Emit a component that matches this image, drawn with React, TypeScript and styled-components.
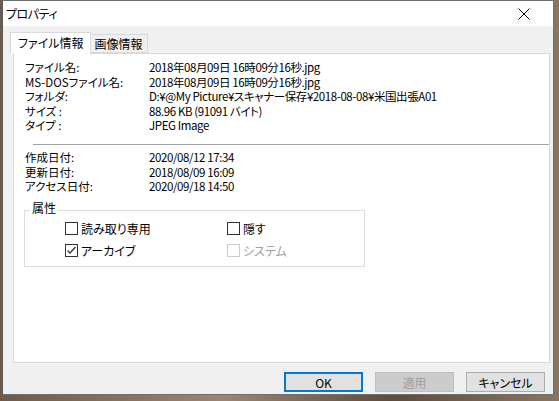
import React from "react";
import styled, { createGlobalStyle } from "styled-components";

const Global = createGlobalStyle`
  html, body { margin: 0; padding: 0; }
  body {
    width: 559px; height: 401px; overflow: hidden;
    background: linear-gradient(90deg, #6e5a48 0%, #9c8672 40%, #5d4b3c 70%, #8a7560 100%);
    font-family: "Noto Sans CJK JP", "Noto Sans", sans-serif;
    font-feature-settings: "palt";
    font-size: 11.5px;
    color: #000;
  }
`;

const Window = styled.div`
  margin-left: 2px;
  width: 552px;
  height: 395px;
  border: 1px solid #6f6f6f;
  border-left-color: #5a5a5a;
  background: #f0f0f0;
  display: flex;
  flex-direction: column;
  box-sizing: border-box;
`;

const TitleBar = styled.div`
  height: 25px;
  background: #fff;
  display: flex;
  align-items: center;
  justify-content: space-between;
  padding: 0 0 0 3px;
  flex: none;
`;

const Title = styled.span`
  font-size: 12px;
  letter-spacing: -0.5px;
`;

const CloseBtn = styled.div`
  width: 46px;
  height: 25px;
  display: flex;
  align-items: center;
  justify-content: center;
  margin-right: 6px;
`;

const Content = styled.div`
  flex: 1;
  display: flex;
  flex-direction: column;
  padding: 6px 6px 0 7px;
`;

const Tabs = styled.div`
  display: flex;
  align-items: flex-end;
  height: 21px;
  position: relative;
  z-index: 1;
`;

const Tab = styled.div<{ $active?: boolean }>`
  box-sizing: border-box;
  border: 1px solid #d9d9d9;
  border-bottom: ${(p) => (p.$active ? "none" : "1px solid #d9d9d9")};
  background: ${(p) => (p.$active ? "#fff" : "#f0f0f0")};
  height: ${(p) => (p.$active ? "22px" : "19px")};
  margin-bottom: ${(p) => (p.$active ? "-1px" : "0")};
  margin-left: ${(p) => (p.$active ? "0" : "-1px")};
  padding: ${(p) => (p.$active ? "2px 6px 0 7px" : "1px 4px 0 4px")};
  line-height: 16px;
  font-size: 12px;
  white-space: nowrap;
`;

const Panel = styled.div`
  box-sizing: border-box;
  height: 310px;
  margin-left: 3px;
  width: 537px;
  background: #fff;
  border: 1px solid #d9d9d9;
  padding: 6px 0 0 11px;
`;

const InfoGrid = styled.div`
  display: grid;
  grid-template-columns: 124px auto;
  line-height: 14.6px;
  white-space: nowrap;
`;

const Label = styled.span``;
const Value = styled.span`
  letter-spacing: -0.4px;
`;

const Separator = styled.div`
  height: 1px;
  background: #a0a0a0;
  margin: 11px 0 5px 8px;
`;

const GroupBox = styled.fieldset`
  margin: 7px 0 0 -1px;
  width: 341px;
  box-sizing: border-box;
  border: 1px solid #dcdcdc;
  padding: 1px 0 8px 40px;
  display: grid;
  grid-template-columns: 162px auto;
  align-content: start;
  row-gap: 8px;
`;

const Legend = styled.legend`
  padding: 0 2px 6px 2px;
  margin-left: -35px;
  line-height: 14px;
  font-size: 12px;
`;

const CheckItem = styled.label<{ $disabled?: boolean }>`
  display: flex;
  align-items: center;
  gap: 3px;
  font-size: 12px;
  color: ${(p) => (p.$disabled ? "#a0a0a0" : "#000")};
  height: 14px;
`;

const Box = styled.span<{ $disabled?: boolean }>`
  width: 13px;
  height: 13px;
  box-sizing: border-box;
  border: 1px solid ${(p) => (p.$disabled ? "#cccccc" : "#333")};
  background: #fff;
  display: flex;
  align-items: center;
  justify-content: center;
`;

const Buttons = styled.div`
  display: flex;
  justify-content: flex-end;
  gap: 12px;
  padding: 9px 2px 0 0;
`;

const Button = styled.div<{ $variant?: "default" | "disabled" | "normal" }>`
  width: 79px;
  height: 20px;
  box-sizing: border-box;
  display: flex;
  align-items: center;
  justify-content: center;
  font-size: 12px;
  background: ${(p) => (p.$variant === "disabled" ? "#cccccc" : "#e1e1e1")};
  border: ${(p) =>
    p.$variant === "default"
      ? "2px solid #0078d7"
      : p.$variant === "disabled"
      ? "1px solid #bfbfbf"
      : "1px solid #adadad"};
  color: ${(p) => (p.$variant === "disabled" ? "#a0a0a0" : "#000")};
`;

const Check: React.FC<{ checked?: boolean; disabled?: boolean; label: string }> = ({
  checked,
  disabled,
  label,
}) => (
  <CheckItem $disabled={disabled}>
    <Box $disabled={disabled}>
      {checked && (
        <svg width="11" height="11" viewBox="0 0 11 11">
          <path d="M1.5 5.5 L4 8 L9.5 2" stroke="#333" strokeWidth="1.3" fill="none" />
        </svg>
      )}
    </Box>
    {label}
  </CheckItem>
);

export default function App() {
  return (
    <>
      <Global />
      <Window>
        <TitleBar>
          <Title>プロパティ</Title>
          <CloseBtn>
            <svg width="12" height="12" viewBox="0 0 12 12">
              <path d="M0.5 0.5 L11.5 11.5 M11.5 0.5 L0.5 11.5" stroke="#000" strokeWidth="1" />
            </svg>
          </CloseBtn>
        </TitleBar>
        <Content>
          <Tabs>
            <Tab $active>ファイル情報</Tab>
            <Tab>画像情報</Tab>
          </Tabs>
          <Panel>
            <InfoGrid>
              <Label>ファイル名:</Label>
              <Value>2018年08月09日 16時09分16秒.jpg</Value>
              <Label>MS-DOSファイル名:</Label>
              <Value>2018年08月09日 16時09分16秒.jpg</Value>
              <Label>フォルダ:</Label>
              <Value>D:¥@My Picture¥スキャナー保存¥2018-08-08¥米国出張A01</Value>
              <Label>サイズ :</Label>
              <Value>88.96 KB (91091 バイト)</Value>
              <Label>タイプ :</Label>
              <Value>JPEG Image</Value>
            </InfoGrid>
            <Separator />
            <InfoGrid>
              <Label>作成日付:</Label>
              <Value>2020/08/12 17:34</Value>
              <Label>更新日付:</Label>
              <Value>2018/08/09 16:09</Value>
              <Label>アクセス日付:</Label>
              <Value>2020/09/18 14:50</Value>
            </InfoGrid>
            <GroupBox>
              <Legend>属性</Legend>
              <Check label="読み取り専用" />
              <Check label="隠す" />
              <Check checked label="アーカイブ" />
              <Check disabled label="システム" />
            </GroupBox>
          </Panel>
          <Buttons>
            <Button $variant="default">OK</Button>
            <Button $variant="disabled">適用</Button>
            <Button $variant="normal">キャンセル</Button>
          </Buttons>
        </Content>
      </Window>
    </>
  );
}
